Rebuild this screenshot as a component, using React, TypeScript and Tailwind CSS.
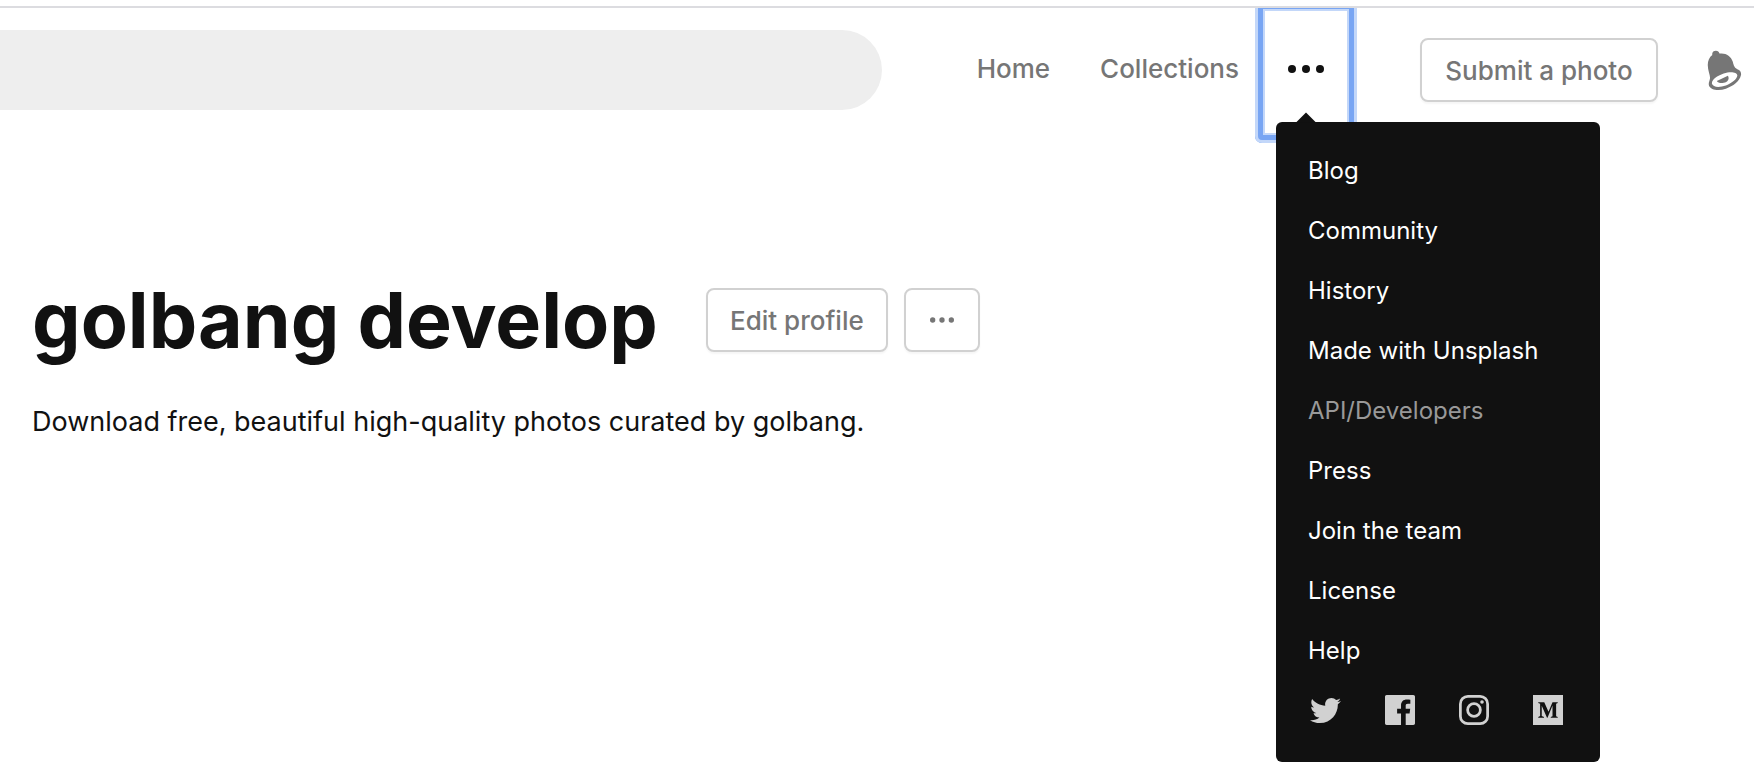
import React from "react";
import { FaTwitter } from "react-icons/fa";

const menuItems = [
  { label: "Blog" },
  { label: "Community" },
  { label: "History" },
  { label: "Made with Unsplash" },
  { label: "API/Developers", active: true },
  { label: "Press" },
  { label: "Join the team" },
  { label: "License" },
  { label: "Help" },
];

function Dots({ className }: { className: string }) {
  return (
    <svg viewBox="0 0 36 8" fill="currentColor" className={className} aria-hidden="true">
      <circle cx="4" cy="4" r="4" />
      <circle cx="18" cy="4" r="4" />
      <circle cx="32" cy="4" r="4" />
    </svg>
  );
}

function Bell() {
  return (
    <svg viewBox="110 58 105 123" fill="currentColor" className="h-10 w-[35px]" aria-hidden="true">
      <path
        fillRule="evenodd"
        d="M125 73C123 65 129 60 136 60C142 60 146 63 147 69C166 66 182 76 188 94C191 106 193 112 202 117C211 120 215 127 213 136C209 154 189 170 167 177C146 184 120 182 115 168C112 160 117 153 118 145C119 135 111 122 111 104C111 91 116 79 125 73ZM124 162C127 173 147 174 167 167C186 160 202 147 202 136C201 126 181 123 160 130C139 137 122 150 124 162Z"
      />
      <path d="M139 153L173 137C179 147 172 157 160 159C150 161 142 158 139 153Z" />
    </svg>
  );
}

function Facebook() {
  return (
    <svg viewBox="0 0 24 24" fill="currentColor" className="size-[30px]" aria-hidden="true">
      <path d="M22.676 0H1.324C.593 0 0 .593 0 1.324v21.352C0 23.408.593 24 1.324 24h11.494v-9.294H9.689v-3.621h3.129V8.41c0-3.099 1.894-4.785 4.659-4.785 1.325 0 2.464.097 2.796.141v3.24h-1.921c-1.5 0-1.792.721-1.792 1.771v2.311h3.584l-.465 3.63H16.56V24h6.115c.733 0 1.325-.592 1.325-1.324V1.324C24 .593 23.408 0 22.676 0" />
    </svg>
  );
}

function Instagram() {
  return (
    <svg viewBox="0 0 24 24" fill="none" stroke="currentColor" strokeWidth="2.2" className="size-[30px]" aria-hidden="true">
      <rect x="1.1" y="1.1" width="21.8" height="21.8" rx="6" />
      <circle cx="12" cy="12" r="5.1" />
      <circle cx="18.4" cy="5.6" r="1.44" fill="currentColor" stroke="none" />
    </svg>
  );
}

function Medium() {
  return (
    <svg viewBox="0 0 24 24" fill="currentColor" className="size-[30px]" aria-hidden="true">
      <path
        fillRule="evenodd"
        d="M0 0H24V24H0ZM4.2 5.7V6.3L5.7 7V16.8L4.2 17.6V18.2H8.8V17.6L7 16.8V8.6L11.2 18.2H11.6L15.6 8.4V16.9L14.2 17.6V18.2H19.8V17.6L18.5 16.9V7L19.8 6.3V5.7H15.6L12.4 13.4L9 5.7Z"
      />
    </svg>
  );
}

const socials = [
  { label: "Twitter", icon: <FaTwitter className="size-[31px]" /> },
  { label: "Facebook", icon: <Facebook /> },
  { label: "Instagram", icon: <Instagram /> },
  { label: "Medium", icon: <Medium /> },
];

const buttonStyle =
  "flex h-16 items-center justify-center rounded-lg border-2 border-[#d1d1d1] bg-white text-[26px] font-medium text-[#767676] shadow-[0_2px_2px_rgba(0,0,0,0.04)]";

export default function App() {
  return (
    <div className="min-h-screen overflow-x-hidden bg-white font-['Inter',sans-serif] text-[#111]">
      <header className="mt-[6px] flex h-[127px] items-start border-t-2 border-[#dcdce0]">
        <input
          type="search"
          aria-label="Search photos"
          className="mt-[22px] h-20 min-w-0 flex-1 rounded-r-full bg-[#eee] px-8 text-[26px] outline-none"
        />
        <nav className="mt-[41px] ml-[95px] flex shrink-0 gap-[50px] text-[26px] leading-10 font-medium text-[#767676]">
          <a href="#home">Home</a>
          <a href="#collections">Collections</a>
        </nav>
        <div className="relative ml-4 shrink-0">
          <button
            type="button"
            aria-label="More links"
            aria-expanded="true"
            className="-mt-[7px] flex h-[142px] w-[102px] items-center justify-center rounded-[7px] pb-[6px] shadow-[inset_0_0_0_3px_#c3d7f9,inset_0_0_0_8px_#78a5f3,inset_0_0_0_10px_#c3d7f9] outline-none [clip-path:inset(7px_0_0_0)]"
          >
            <Dots className="h-2 w-9" />
          </button>
          <div className="absolute top-[114px] left-[21px] z-10 w-[324px] rounded-md bg-[#111] px-8 pt-[19px] pb-[34px] text-white">
            <svg viewBox="0 0 20 10" className="absolute -top-[10px] left-5 h-[11px] w-5" aria-hidden="true">
              <path d="M0 10L10 0L20 10Z" fill="#111" />
            </svg>
            <ul>
              {menuItems.map((item) => (
                <li key={item.label}>
                  <a
                    href="#menu"
                    className={
                      item.active
                        ? "block text-2xl leading-[60px] whitespace-nowrap text-[#999]"
                        : "block text-2xl leading-[60px] whitespace-nowrap"
                    }
                  >
                    {item.label}
                  </a>
                </li>
              ))}
            </ul>
            <div className="mt-[11px] flex h-9 items-center justify-between pr-[5px] pl-[2px] text-[#d1d1d1]">
              {socials.map((social) => (
                <a key={social.label} href="#social" aria-label={social.label}>
                  {social.icon}
                </a>
              ))}
            </div>
          </div>
        </div>
        <button type="button" className={`${buttonStyle} mt-[30px] ml-[63px] w-[238px] shrink-0`}>
          Submit a photo
        </button>
        <button type="button" aria-label="Notifications" className="mt-[42px] mr-3 ml-[49px] shrink-0 text-[#767676]">
          <Bell />
        </button>
      </header>
      <main className="px-8 pt-[139px]">
        <div className="flex items-center">
          <h1 className="text-[77px] leading-[96px] font-bold whitespace-nowrap">golbang develop</h1>
          <button type="button" className={`${buttonStyle} ml-12 w-[182px]`}>
            Edit profile
          </button>
          <button type="button" aria-label="More actions" className={`${buttonStyle} ml-4 w-[76px]`}>
            <Dots className="h-[6px] w-6" />
          </button>
        </div>
        <p className="mt-8 text-[27px] leading-[44px]">
          Download free, beautiful high-quality photos curated by golbang.
        </p>
      </main>
    </div>
  );
}
